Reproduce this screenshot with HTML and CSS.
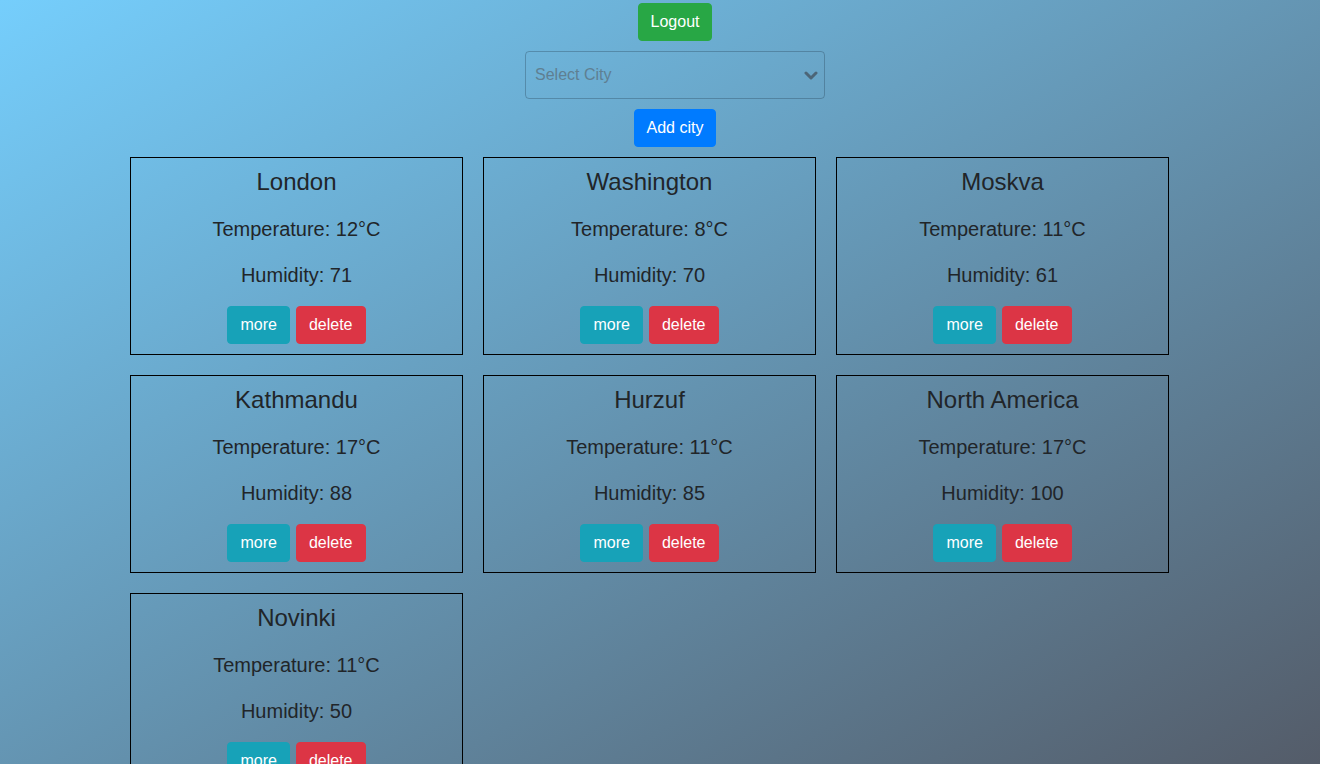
FILE: index.html
```html
<!DOCTYPE html>
<html lang="en">
<head>
<meta charset="utf-8">
<title>Weather</title>
<link rel="stylesheet" href="styles.css">
</head>
<body>
<header class="top">
  <button class="btn btn-green">Logout</button>
  <div class="select">
    <span class="select-text">Select City</span>
    <svg class="chev" width="14" height="10" viewBox="0 0 14 10"><polyline points="2,2 7,7 12,2" fill="none" stroke="#4c6577" stroke-width="3" stroke-linecap="round" stroke-linejoin="round"/></svg>
  </div>
  <button class="btn btn-blue">Add city</button>
</header>
<main class="cards">
  <div class="card"><h3 class="title">London</h3><p class="line">Temperature: 12°C</p><p class="line">Humidity: 71</p><div class="actions"><button class="btn btn-cyan">more</button><button class="btn btn-red">delete</button></div></div>
  <div class="card"><h3 class="title">Washington</h3><p class="line">Temperature: 8°C</p><p class="line">Humidity: 70</p><div class="actions"><button class="btn btn-cyan">more</button><button class="btn btn-red">delete</button></div></div>
  <div class="card"><h3 class="title">Moskva</h3><p class="line">Temperature: 11°C</p><p class="line">Humidity: 61</p><div class="actions"><button class="btn btn-cyan">more</button><button class="btn btn-red">delete</button></div></div>
  <div class="card"><h3 class="title">Kathmandu</h3><p class="line">Temperature: 17°C</p><p class="line">Humidity: 88</p><div class="actions"><button class="btn btn-cyan">more</button><button class="btn btn-red">delete</button></div></div>
  <div class="card"><h3 class="title">Hurzuf</h3><p class="line">Temperature: 11°C</p><p class="line">Humidity: 85</p><div class="actions"><button class="btn btn-cyan">more</button><button class="btn btn-red">delete</button></div></div>
  <div class="card"><h3 class="title">North America</h3><p class="line">Temperature: 17°C</p><p class="line">Humidity: 100</p><div class="actions"><button class="btn btn-cyan">more</button><button class="btn btn-red">delete</button></div></div>
  <div class="card"><h3 class="title">Novinki</h3><p class="line">Temperature: 11°C</p><p class="line">Humidity: 50</p><div class="actions"><button class="btn btn-cyan">more</button><button class="btn btn-red">delete</button></div></div>
</main>
</body>
</html>
```
FILE: styles.css
```css
* { box-sizing: border-box; }
html { min-height: 100%; }
body {
  margin: 0;
  font-family: "Liberation Sans", Arial, sans-serif;
  color: #212529;
  font-size: 16px;
  line-height: 1.5;
  background: linear-gradient(to bottom right, #75cefc, #545c69) fixed;
  min-height: 100vh;
}
.top {
  display: flex;
  flex-direction: column;
  align-items: center;
  gap: 10px;
  padding: 3px 0 0 30px;
}
.btn {
  font-family: inherit;
  font-size: 16px;
  line-height: 24px;
  padding: 6px 12px;
  border: 1px solid transparent;
  border-radius: 4px;
  color: #fff;
  cursor: pointer;
}
.btn-green { background: #28a745; border-color: #28a745; }
.btn-blue { background: #007bff; border-color: #007bff; }
.btn-cyan { background: #17a2b8; border-color: #17a2b8; }
.btn-red { background: #dc3545; border-color: #dc3545; }
.select {
  width: 300px;
  height: 48px;
  border: 1px solid rgba(40, 70, 90, 0.35);
  border-radius: 4px;
  display: flex;
  align-items: center;
  justify-content: space-between;
  padding: 0 6px 0 9px;
}
.select-text { color: #5f7f92; }
.chev { margin-top: 2px; }
.cards {
  width: 1080px;
  margin: 0 auto;
  display: flex;
  flex-wrap: wrap;
  align-content: flex-start;
}
.card {
  width: 333px;
  margin: 10px;
  border: 1px solid #000;
  padding: 9px 10px 10px;
  text-align: center;
}
.title {
  margin: 0 0 17px;
  font-size: 24px;
  line-height: 30px;
  font-weight: 400;
}
.line {
  margin: 0 0 16px;
  font-size: 20px;
  line-height: 30px;
}
.actions {
  display: flex;
  justify-content: center;
  gap: 6px;
}
```
